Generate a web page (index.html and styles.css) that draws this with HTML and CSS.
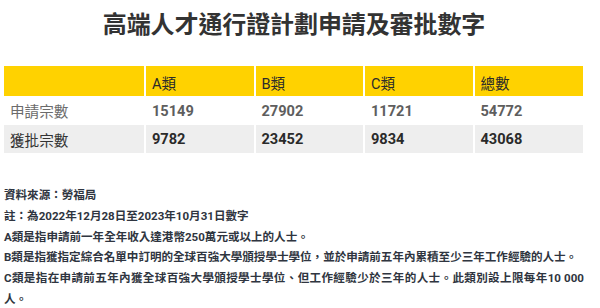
FILE: index.html
```html
<!DOCTYPE html>
<html lang="zh-Hant">
<head>
<meta charset="utf-8">
<title>高端人才通行證計劃申請及審批數字</title>
<link rel="stylesheet" href="styles.css">
</head>
<body>
<main class="page">
  <h1 class="title">高端人才通行證計劃申請及審批數字</h1>
  <table class="stats">
    <colgroup>
      <col class="c-label">
      <col class="c-num">
      <col class="c-num">
      <col class="c-num">
      <col class="c-num">
    </colgroup>
    <thead>
      <tr class="head-row">
        <th></th>
        <th>A類</th>
        <th>B類</th>
        <th>C類</th>
        <th>總數</th>
      </tr>
    </thead>
    <tbody>
      <tr class="row-apply">
        <td class="label">申請宗數</td>
        <td>15149</td>
        <td>27902</td>
        <td>11721</td>
        <td>54772</td>
      </tr>
      <tr class="row-approve">
        <td class="label">獲批宗數</td>
        <td>9782</td>
        <td>23452</td>
        <td>9834</td>
        <td>43068</td>
      </tr>
    </tbody>
  </table>
  <div class="notes">
    <p>資料來源：勞福局</p>
    <p>註：為2022年12月28日至2023年10月31日數字</p>
    <p>A類是指申請前一年全年收入達港幣250萬元或以上的人士。</p>
    <p>B類是指獲指定綜合名單中訂明的全球百強大學頒授學士學位，並於申請前五年內累積至少三年工作經驗的人士。</p>
    <p>C類是指在申請前五年內獲全球百強大學頒授學士學位、但工作經驗少於三年的人士。此類別設上限每年10 000人。</p>
  </div>
</main>
</body>
</html>
```

FILE: styles.css
```css
html, body {
  margin: 0;
  padding: 0;
  background: #ffffff;
}

body {
  font-family: "Roboto", "Noto Sans CJK TC", sans-serif;
  color: #333333;
}

.page {
  width: 580px;
  margin-left: 4px;
  display: flex;
  flex-direction: column;
}

.title {
  margin: 8px 0 0 0;
  font-size: 24px;
  line-height: 34px;
  font-weight: 700;
  color: #333333;
  text-align: center;
  letter-spacing: -0.1px;
}

.stats {
  margin-top: 24px;
  width: 579px;
  border-collapse: collapse;
  table-layout: fixed;
  font-size: 14.6px;
}

.c-label { width: 141px; }
.c-num { width: 109.5px; }

.stats th,
.stats td {
  padding: 0 0 0 6px;
  text-align: left;
  border-right: 2px solid #ffffff;
  white-space: nowrap;
}

.stats th:last-child,
.stats td:last-child {
  border-right: 0;
}

.head-row th {
  background: #ffd200;
  height: 28px;
  font-weight: 400;
  color: #2b2b2b;
  padding-top: 2px;
}

.row-apply td {
  height: 29px;
  color: #5e5e5e;
  font-weight: 700;
}

.row-approve td {
  height: 28px;
  background: #eeeeee;
  color: #2a2a2a;
  font-weight: 700;
}

.stats td.label {
  font-weight: 400;
}

.row-apply td.label { color: #6b6b6b; }
.row-approve td.label { color: #333333; }

.notes {
  margin-top: 32px;
  font-size: 11.55px;
  line-height: 20.8px;
  font-weight: 700;
  color: #2f3540;
}

.notes p {
  margin: 0;
  text-align: justify;
}
```
